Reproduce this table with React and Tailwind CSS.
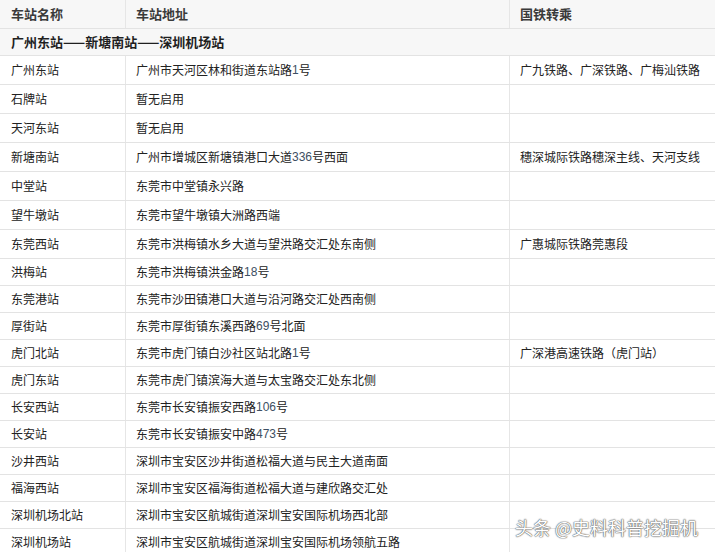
const rows = [
  ['广州东站', ['广州市天河区林和街道东站路', '1', '号'], '广九铁路、广深铁路、广梅汕铁路'],
  ['石牌站', ['暂无启用'], ''],
  ['天河东站', ['暂无启用'], ''],
  ['新塘南站', ['广州市增城区新塘镇港口大道', '336', '号西面'], '穗深城际铁路穗深主线、天河支线'],
  ['中堂站', ['东莞市中堂镇永兴路'], ''],
  ['望牛墩站', ['东莞市望牛墩镇大洲路西端'], ''],
  ['东莞西站', ['东莞市洪梅镇水乡大道与望洪路交汇处东南侧'], '广惠城际铁路莞惠段'],
  ['洪梅站', ['东莞市洪梅镇洪金路', '18', '号'], ''],
  ['东莞港站', ['东莞市沙田镇港口大道与沿河路交汇处西南侧'], ''],
  ['厚街站', ['东莞市厚街镇东溪西路', '69', '号北面'], ''],
  ['虎门北站', ['东莞市虎门镇白沙社区站北路', '1', '号'], '广深港高速铁路（虎门站）'],
  ['虎门东站', ['东莞市虎门镇滨海大道与太宝路交汇处东北侧'], ''],
  ['长安西站', ['东莞市长安镇振安西路', '106', '号'], ''],
  ['长安站', ['东莞市长安镇振安中路', '473', '号'], ''],
  ['沙井西站', ['深圳市宝安区沙井街道松福大道与民主大道南面'], ''],
  ['福海西站', ['深圳市宝安区福海街道松福大道与建欣路交汇处'], ''],
  ['深圳机场北站', ['深圳市宝安区航城街道深圳宝安国际机场西北部'], ''],
  ['深圳机场站', ['深圳市宝安区航城街道深圳宝安国际机场领航五路'], ''],
]

const font = { fontFamily: '"Noto Sans CJK SC", "Liberation Sans", sans-serif' }

function Address({ parts }) {
  return (
    <>
      {parts.map((p, i) =>
        i % 2 === 1 ? (
          <span key={i} className="text-[#3d4f63]" style={{ fontFamily: '"Liberation Sans", sans-serif' }}>{p}</span>
        ) : (
          <span key={i}>{p}</span>
        )
      )}
    </>
  )
}

export default function App() {
  return (
    <div className="relative w-[715px] h-[552px] overflow-hidden bg-white text-[#222]" style={font}>
      <div className="grid grid-cols-[126px_384px_1fr] h-[29px] bg-[#f7f7f7] border-b border-[#e3e3e3] text-[13px] font-bold text-[#3a3a3a]">
        <div className="flex items-center pl-[11px] border-r border-[#e6e6e6]">车站名称</div>
        <div className="flex items-center pl-[10px] border-r border-[#e6e6e6]">车站地址</div>
        <div className="flex items-center pl-[10px]">国铁转乘</div>
      </div>
      <div className="flex items-center h-[27px] pl-[11px] bg-[#f7f7f7] border-b border-[#e3e3e3] text-[13px] font-bold text-[#1f1f1f]">
        广州东站——新塘南站——深圳机场站
      </div>
      {rows.map(([name, addr, rail], i) => (
        <div
          key={name}
          className={`grid grid-cols-[126px_384px_1fr] border-b border-[#e3e3e3] text-[12px] ${i < 7 ? 'h-[29px]' : 'h-[27px]'}`}
        >
          <div className="flex items-center pl-[11px] border-r border-[#e6e6e6]">{name}</div>
          <div className="flex items-center pl-[10px] border-r border-[#e6e6e6]"><Address parts={addr} /></div>
          <div className="flex items-center pl-[10px]">{rail}</div>
        </div>
      ))}
      <div
        className="absolute left-[515px] top-[514px] text-[18px] leading-[26px] text-white whitespace-nowrap"
        style={{ textShadow: '0 0 1px #555, 0 0 1px #555, 0 0 2px rgba(0,0,0,0.4)' }}
      >
        头条 @史料科普挖掘机
      </div>
    </div>
  )
}
